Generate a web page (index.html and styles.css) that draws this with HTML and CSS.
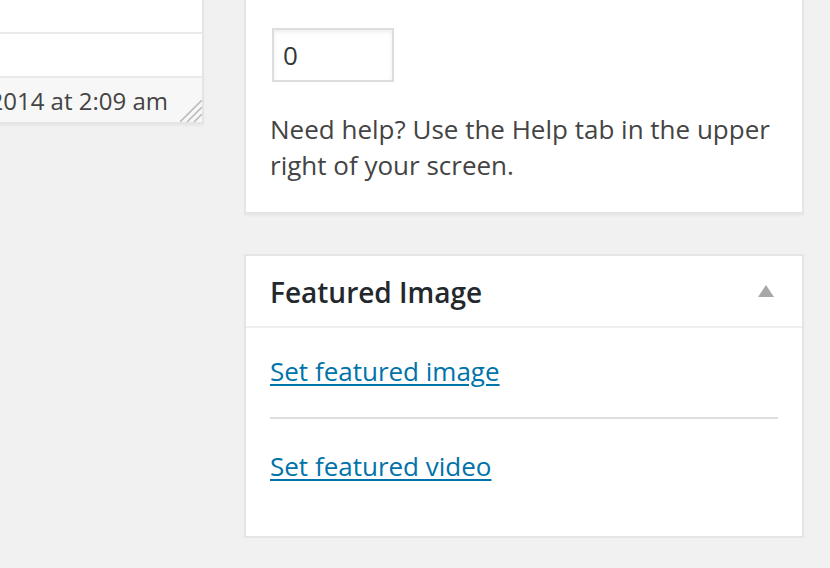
FILE: index.html
```html
<!DOCTYPE html>
<html lang="en">
<head>
<meta charset="utf-8">
<title>Edit Post</title>
<link rel="stylesheet" href="styles.css">
</head>
<body>
<div class="wrap">
  <div class="editor">
    <div class="editor-area"></div>
    <div class="path-row"></div>
    <div class="status">
      <span class="word-count">Word count: 0</span>
      <span class="last-edited">Last edited by admin on March 4, 2014 at 2:09 am</span>
      <svg class="resize" width="22" height="22" viewBox="0 0 22 22" aria-hidden="true">
        <path d="M0 22 L22 0 M7 22 L22 7 M14 22 L22 14" stroke="#bdbdbd" stroke-width="1.6" fill="none"/>
      </svg>
    </div>
  </div>
  <div class="side">
    <div class="postbox">
      <div class="inside first">
        <input class="num" type="text" value="0">
        <p class="help">Need help? Use the Help tab in the upper right of your screen.</p>
      </div>
    </div>
    <div class="postbox">
      <div class="hndle">
        <h3 class="title">Featured Image</h3>
        <svg class="toggle" width="16" height="12" viewBox="0 0 16 12" aria-hidden="true">
          <polygon points="8,0 16,12 0,12" fill="#a8a8a8"/>
        </svg>
      </div>
      <div class="inside media">
        <p class="line"><a href="#" class="link">Set featured image</a></p>
        <div class="sep"></div>
        <p class="line"><a href="#" class="link">Set featured video</a></p>
      </div>
    </div>
  </div>
</div>
</body>
</html>
```

FILE: styles.css
```css
html, body {
  margin: 0;
  padding: 0;
}
body {
  background: #f1f1f1;
  font-family: "Open Sans", "Liberation Sans", sans-serif;
  font-size: 26px;
  color: #444;
  overflow: hidden;
}
.wrap {
  display: flex;
  align-items: flex-start;
  gap: 40px;
  margin: -40px 0 0 -696px;
}
.editor {
  flex: 0 0 900px;
  box-sizing: border-box;
  border: 2px solid #e5e5e5;
  background: #fff;
  box-shadow: 0 2px 2px rgba(0,0,0,.04);
}
.editor-area {
  height: 70px;
  border-bottom: 2px solid #e9e9e9;
}
.path-row {
  height: 42px;
  border-bottom: 2px solid #e9e9e9;
}
.status {
  position: relative;
  height: 44px;
  background: #f7f7f7;
  display: flex;
  align-items: center;
  justify-content: space-between;
  padding: 1px 34px 0 20px;
  box-sizing: border-box;
  font-size: 24px;
  line-height: 34px;
  white-space: nowrap;
  color: #444;
}
.resize {
  position: absolute;
  right: 0;
  bottom: 0;
  display: block;
}
.side {
  flex: 0 0 560px;
  display: flex;
  flex-direction: column;
  gap: 40px;
}
.postbox {
  box-sizing: border-box;
  background: #fff;
  border: 2px solid #e5e5e5;
  box-shadow: 0 2px 2px rgba(0,0,0,.04);
}
.inside {
  padding: 0 24px;
}
.inside.first {
  padding-top: 64px;
  padding-bottom: 28px;
}
.num {
  display: block;
  box-sizing: border-box;
  width: 122px;
  height: 54px;
  margin: 2px;
  padding: 0 9px;
  border: 2px solid #ddd;
  box-shadow: inset 0 2px 4px rgba(0,0,0,.07);
  background: #fff;
  font-family: "Open Sans", "Liberation Sans", sans-serif;
  font-size: 26px;
  color: #32373c;
  outline: none;
}
.help {
  margin: 29px 0 0;
  line-height: 36.4px;
}
.hndle {
  display: flex;
  align-items: center;
  justify-content: space-between;
  padding: 17px 28px 15px 24px;
  border-bottom: 2px solid #eeeeee;
}
.title {
  margin: 0;
  font-size: 28px;
  font-weight: 600;
  line-height: 38px;
  color: #23282d;
}
.toggle {
  display: block;
  margin-top: -2px;
}
.inside.media {
  padding-top: 25px;
  padding-bottom: 51px;
}
.line {
  margin: 0;
  line-height: 36.4px;
}
.link {
  color: #0073aa;
  text-decoration: underline;
  text-decoration-thickness: 2px;
  text-underline-offset: 3px;
}
.sep {
  height: 2px;
  background: #dedede;
  margin: 28px 0 29px;
}
```
